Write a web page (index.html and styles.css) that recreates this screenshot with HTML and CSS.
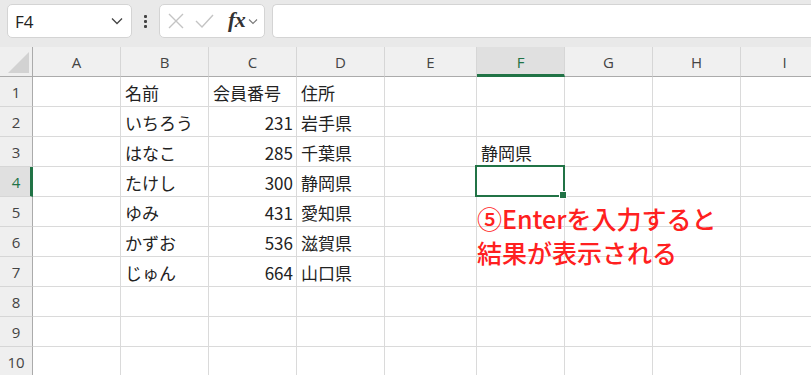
FILE: index.html
```html
<!DOCTYPE html>
<html lang="ja">
<head>
<meta charset="utf-8">
<link rel="stylesheet" href="styles.css">
</head>
<body>
<div class="toolbar">
  <div class="namebox">
    <span class="name">F4</span>
    <svg class="chev" width="12" height="8" viewBox="0 0 12 8"><path d="M1 1.5 L6 6.5 L11 1.5" fill="none" stroke="#444" stroke-width="1.3"/></svg>
  </div>
  <div class="dots"><i></i><i></i><i></i></div>
  <div class="fxbox">
    <svg width="18" height="18" viewBox="0 0 18 18"><path d="M2 2 L16 16 M16 2 L2 16" stroke="#c4c4c4" stroke-width="1.4" fill="none"/></svg>
    <svg width="20" height="18" viewBox="0 0 20 18"><path d="M2 9 L8 15 L19 3" stroke="#c4c4c4" stroke-width="1.4" fill="none"/></svg>
    <span class="fx">fx</span>
    <svg class="chev2" width="10" height="7" viewBox="0 0 10 7"><path d="M1 1.5 L5 5.5 L9 1.5" fill="none" stroke="#777" stroke-width="1.1"/></svg>
  </div>
  <div class="formula"></div>
</div>
<div class="sheet">
  <div class="grid">
    <div class="corner"><span class="tri"></span></div>
    <div class="ch">A</div><div class="ch">B</div><div class="ch">C</div><div class="ch">D</div><div class="ch">E</div><div class="ch sel">F</div><div class="ch">G</div><div class="ch">H</div><div class="ch">I</div>

    <div class="rh">1</div><div class="c"></div><div class="c">名前</div><div class="c">会員番号</div><div class="c">住所</div><div class="c"></div><div class="c"></div><div class="c"></div><div class="c"></div><div class="c"></div>
    <div class="rh">2</div><div class="c"></div><div class="c">いちろう</div><div class="c num">231</div><div class="c">岩手県</div><div class="c"></div><div class="c"></div><div class="c"></div><div class="c"></div><div class="c"></div>
    <div class="rh">3</div><div class="c"></div><div class="c">はなこ</div><div class="c num">285</div><div class="c">千葉県</div><div class="c"></div><div class="c">静岡県</div><div class="c"></div><div class="c"></div><div class="c"></div>
    <div class="rh sel">4</div><div class="c"></div><div class="c">たけし</div><div class="c num">300</div><div class="c">静岡県</div><div class="c"></div><div class="c active"><span class="selbox"><span class="handle"></span></span></div><div class="c"></div><div class="c"></div><div class="c"></div>
    <div class="rh">5</div><div class="c"></div><div class="c">ゆみ</div><div class="c num">431</div><div class="c">愛知県</div><div class="c"></div><div class="c note-anchor"><div class="note">⑤Enterを入力すると<br>結果が表示される</div></div><div class="c"></div><div class="c"></div><div class="c"></div>
    <div class="rh">6</div><div class="c"></div><div class="c">かずお</div><div class="c num">536</div><div class="c">滋賀県</div><div class="c"></div><div class="c"></div><div class="c"></div><div class="c"></div><div class="c"></div>
    <div class="rh">7</div><div class="c"></div><div class="c">じゅん</div><div class="c num">664</div><div class="c">山口県</div><div class="c"></div><div class="c"></div><div class="c"></div><div class="c"></div><div class="c"></div>
    <div class="rh">8</div><div class="c"></div><div class="c"></div><div class="c"></div><div class="c"></div><div class="c"></div><div class="c"></div><div class="c"></div><div class="c"></div><div class="c"></div>
    <div class="rh">9</div><div class="c"></div><div class="c"></div><div class="c"></div><div class="c"></div><div class="c"></div><div class="c"></div><div class="c"></div><div class="c"></div><div class="c"></div>
    <div class="rh">10</div><div class="c"></div><div class="c"></div><div class="c"></div><div class="c"></div><div class="c"></div><div class="c"></div><div class="c"></div><div class="c"></div><div class="c"></div>
  </div>
</div>
</body>
</html>
```
FILE: styles.css
```css
* { box-sizing: border-box; }
html, body { margin: 0; padding: 0; }
body {
  width: 811px;
  height: 375px;
  overflow: hidden;
  background: #fff;
  font-family: "Noto Sans CJK JP", "Noto Sans", sans-serif;
}
.toolbar {
  height: 47px;
  background: #e9e9e9;
  display: flex;
  align-items: flex-start;
  padding: 4px 0 0 7px;
}
.namebox {
  width: 125px;
  height: 34px;
  background: #fff;
  border: 1px solid #d4d4d4;
  border-radius: 5px;
  display: flex;
  align-items: center;
  justify-content: space-between;
  padding: 0 8px 0 7px;
}
.name {
  font-family: "Open Sans", "Liberation Sans", sans-serif;
  font-size: 17px;
  color: #222;
}
.dots {
  width: 27px;
  height: 34px;
  display: flex;
  flex-direction: column;
  align-items: center;
  justify-content: center;
  gap: 2px;
}
.dots i {
  display: block;
  width: 3px;
  height: 3px;
  background: #444;
  border-radius: 1px;
}
.fxbox {
  width: 106px;
  height: 34px;
  background: #fff;
  border: 1px solid #d4d4d4;
  border-radius: 5px;
  display: flex;
  align-items: center;
  padding: 0 0 0 7px;
  gap: 9px;
}
.fx {
  font-family: "Liberation Serif", "DejaVu Serif", serif;
  font-style: italic;
  font-weight: bold;
  font-size: 22px;
  color: #333;
  margin-left: 5px;
  letter-spacing: -0.5px;
  line-height: 1;
  padding-bottom: 3px;
}
.chev2 { margin-left: -6px; }
.formula {
  flex: 1;
  height: 34px;
  margin-left: 7px;
  background: #fff;
  border: 1px solid #d4d4d4;
  border-right: none;
  border-radius: 5px 0 0 5px;
}
.sheet { overflow: hidden; }
.grid {
  display: grid;
  grid-template-columns: 33px 88px 88px 88px 88px 92px 88px 88px 88px 88px;
  grid-auto-rows: 30px;
  width: 829px;
}
.corner {
  background: #efefef;
  border-right: 1px solid #ababab;
  border-bottom: 1px solid #ababab;
  position: relative;
}
.tri {
  position: absolute;
  right: 3px;
  bottom: 3px;
  width: 0;
  height: 0;
  border-left: 21px solid transparent;
  border-bottom: 21px solid #d2d2d2;
}
.ch {
  background: #f0f0f0;
  border-right: 1px solid #d6d6d6;
  border-bottom: 1px solid #ababab;
  display: flex;
  align-items: center;
  justify-content: center;
  font-family: "Open Sans", "Liberation Sans", sans-serif;
  font-size: 15px;
  color: #444;
  padding-top: 1px;
}
.ch.sel {
  background: #e0e0e0;
  color: #217346;
  border-bottom: 3px solid #217346;
  padding-top: 3px;
}
.rh {
  background: #efefef;
  border-right: 1px solid #ababab;
  border-bottom: 1px solid #d6d6d6;
  display: flex;
  align-items: center;
  justify-content: center;
  font-family: "Open Sans", "Liberation Sans", sans-serif;
  font-size: 15px;
  color: #444;
}
.rh.sel {
  background: #e0e0e0;
  color: #217346;
  border-right: 3px solid #217346;
  padding-left: 2px;
}
.c {
  border-right: 1px solid #dadada;
  border-bottom: 1px solid #dadada;
  display: flex;
  align-items: center;
  padding: 1px 3px 0 4px;
  font-size: 17px;
  color: #222;
  white-space: nowrap;
  position: relative;
}
.c.num { justify-content: flex-end; }
.selbox {
  position: absolute;
  left: -2px;
  top: -2px;
  right: -1px;
  bottom: -1px;
  border: 2px solid #217346;
  z-index: 2;
}
.handle {
  position: absolute;
  right: -4px;
  bottom: -4px;
  width: 6px;
  height: 6px;
  background: #217346;
  border: 1px solid #fff;
  box-sizing: content-box;
}
.note-anchor { overflow: visible; }
.note {
  position: absolute;
  left: 0;
  top: 4px;
  z-index: 3;
  color: #ff2020;
  font-size: 25px;
  font-weight: 500;
  line-height: 34px;
  white-space: nowrap;
}
```
